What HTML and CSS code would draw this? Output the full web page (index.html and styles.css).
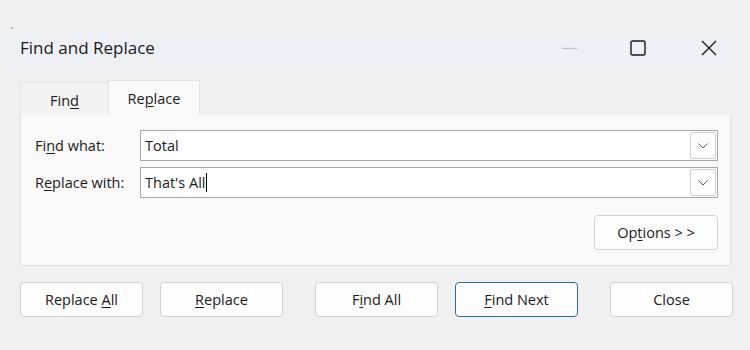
FILE: index.html
```html
<!DOCTYPE html>
<html>
<head>
<meta charset="utf-8">
<link rel="stylesheet" href="styles.css">
</head>
<body>
<div class="screen">
  <span class="corner"></span>
  <div class="titlebar">
    <span class="title">Find and Replace</span>
    <div class="controls">
      <span class="ctl ctl-min"><svg width="16" height="16" viewBox="0 0 16 16"><line x1="1" y1="8.5" x2="16" y2="8.5" stroke="#c4c4c4" stroke-width="1.2"/></svg></span>
      <span class="ctl ctl-max"><svg width="16" height="16" viewBox="0 0 16 16"><rect x="1" y="1" width="14" height="14" rx="1.5" fill="none" stroke="#1a1a1a" stroke-width="1.4"/></svg></span>
      <span class="ctl ctl-close"><svg width="16" height="16" viewBox="0 0 16 16"><path d="M1 1 L15 15 M15 1 L1 15" stroke="#1a1a1a" stroke-width="1.4"/></svg></span>
    </div>
  </div>
  <div class="tabs">
    <span class="tab">Fin<u>d</u></span>
    <span class="tab active">Re<u>p</u>lace</span>
  </div>
  <div class="panel">
    <div class="row">
      <label class="lbl">Fi<u>n</u>d what:</label>
      <div class="combo"><span class="val">Total</span><span class="drop"><svg width="10" height="6" viewBox="0 0 10 6"><path d="M0.5 0.5 L5 5 L9.5 0.5" fill="none" stroke="#555" stroke-width="1"/></svg></span></div>
    </div>
    <div class="row">
      <label class="lbl">R<u>e</u>place with:</label>
      <div class="combo"><span class="val">That's All<span class="caret"></span></span><span class="drop"><svg width="10" height="6" viewBox="0 0 10 6"><path d="M0.5 0.5 L5 5 L9.5 0.5" fill="none" stroke="#555" stroke-width="1"/></svg></span></div>
    </div>
    <div class="opts-row">
      <button class="btn">Op<u>t</u>ions &gt; &gt;</button>
    </div>
  </div>
  <div class="actions">
    <button class="btn">Replace <u>A</u>ll</button>
    <button class="btn gap-s"><u>R</u>eplace</button>
    <button class="btn gap-l">F<u>i</u>nd All</button>
    <button class="btn gap-s primary"><u>F</u>ind Next</button>
    <button class="btn gap-l">Close</button>
  </div>
</div>
</body>
</html>
```
FILE: styles.css
```css
* { box-sizing: border-box; }
html, body {
  margin: 0;
  padding: 0;
  background: #f0f0f0;
}
body {
  width: 750px;
  height: 350px;
  overflow: hidden;
  font-family: "Open Sans", "Noto Sans", "Liberation Sans", sans-serif;
  color: #1b1b1b;
}
u { text-decoration-thickness: 1px; text-underline-offset: 2px; }
.screen {
  position: relative;
  width: 750px;
  height: 350px;
  padding-top: 32px;
}
.corner {
  position: absolute;
  left: 11px;
  top: 27px;
  width: 2px;
  height: 2px;
  background: #b8b8b8;
}
.titlebar {
  margin-left: 8px;
  width: 728px;
  height: 38px;
  background: #eef0f6;
  display: flex;
  align-items: center;
  padding-left: 12px;
}
.title {
  font-size: 17px;
  color: #1a1a1a;
  flex: 1;
  padding-bottom: 7px;
}
.controls {
  display: flex;
  align-items: center;
  height: 100%;
  padding-bottom: 6px;
}
.ctl { display: flex; align-items: center; }
.ctl-min { margin-right: 53px; }
.ctl-max { margin-right: 55px; }
.ctl-close { margin-right: 19px; }
.tabs {
  display: flex;
  align-items: flex-end;
  margin-left: 20px;
  margin-top: 11px;
  height: 34px;
}
.tab {
  width: 88px;
  height: 33px;
  display: flex;
  align-items: center;
  justify-content: center;
  font-size: 14.5px;
  background: #f3f3f3;
  border-top: 1px solid #e6e6e6;
  border-left: 1px solid #e6e6e6;
  padding-top: 2px;
}
.tab.active {
  width: 92px;
  height: 35px;
  background: #f9f9f9;
  border: 1px solid #e4e4e4;
  border-bottom: none;
  padding-top: 0;
}
.panel {
  margin-left: 20px;
  width: 711px;
  height: 151px;
  background: #f9f9f9;
  border: 1px solid #e2e2e2;
  border-top: none;
  padding: 15px 12px 0 14px;
}
.row {
  display: flex;
  align-items: center;
  height: 31px;
  margin-bottom: 6px;
}
.lbl {
  width: 105px;
  font-size: 14.5px;
  color: #1b1b1b;
}
.combo {
  flex: 1;
  height: 31px;
  background: #fff;
  border: 1px solid #a6a6a6;
  display: flex;
  align-items: center;
  padding-left: 4px;
  padding-right: 1px;
}
.val {
  flex: 1;
  font-size: 14.5px;
  display: flex;
  align-items: center;
}
.caret {
  display: inline-block;
  width: 1px;
  height: 19px;
  background: #000;
  margin-left: 1px;
}
.drop {
  width: 26px;
  height: 27px;
  border: 1px solid #cfcfcf;
  border-radius: 2px;
  background: #fdfdfd;
  display: flex;
  align-items: center;
  justify-content: center;
}
.opts-row {
  display: flex;
  justify-content: flex-end;
  margin-top: 17px;
}
.btn {
  width: 124px;
  height: 35px;
  border: 1px solid #d2d2d2;
  border-radius: 4px;
  background: #fdfdfd;
  font-family: inherit;
  font-size: 14.5px;
  color: #1b1b1b;
  padding: 0;
}
.actions {
  display: flex;
  margin-left: 20px;
  margin-top: 16px;
}
.actions .btn { width: 123px; }
.gap-s { margin-left: 17px; }
.gap-l { margin-left: 32px; }
.btn.primary {
  border-color: #2c6e92;
}
```
